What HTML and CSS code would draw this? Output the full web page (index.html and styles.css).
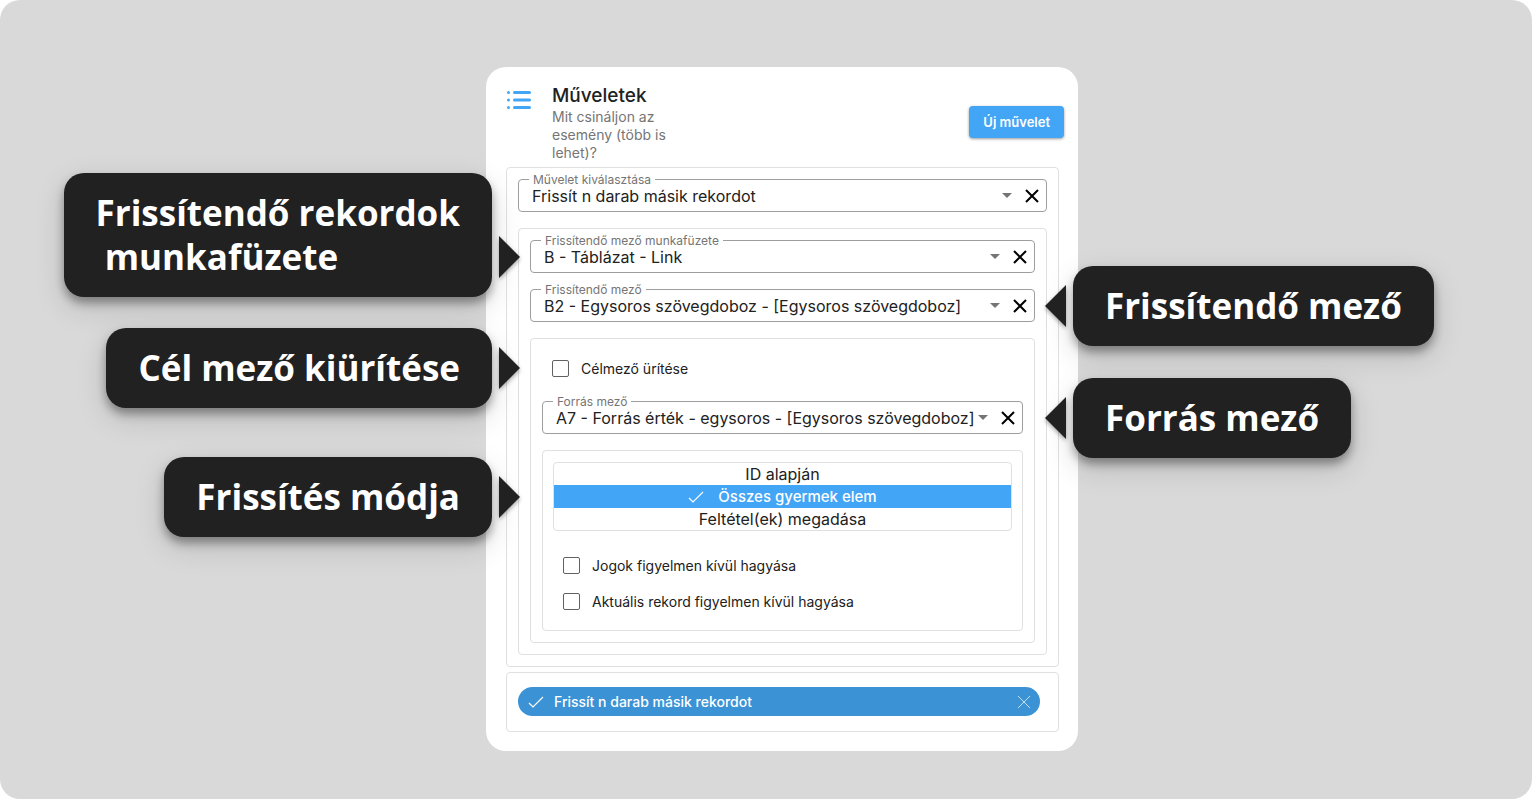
FILE: index.html
```html
<!DOCTYPE html>
<html lang="hu">
<head>
  <meta charset="UTF-8">
  <meta name="viewport" content="width=device-width, initial-scale=1.0">
  <title>Műveletek</title>
  <link rel="stylesheet" href="styles.css">
</head>
<body>
  <!-- shared icons -->
  <svg class="sprite" aria-hidden="true">
    <symbol id="icon-close" viewBox="0 0 14 14">
      <path d="M1 1l12 12M13 1L1 13" fill="none" stroke="currentColor"/>
    </symbol>
    <symbol id="icon-check" viewBox="0 0 16 12">
      <path d="M1 7l4 4L15 1" fill="none" stroke="currentColor" stroke-width="1.200"/>
    </symbol>
    <symbol id="icon-arrow" viewBox="0 0 10 5">
      <path d="M0 0h10L5 5z" fill="currentColor"/>
    </symbol>
  </svg>

  <main class="stage">
    <section class="panel">
      <header class="panel-header">
        <svg class="list-icon" viewBox="0 0 24 18" aria-hidden="true">
          <path d="M7.500 1.500h15M7.500 9h15M7.500 16.500h15" fill="none" stroke="currentColor" stroke-width="3" stroke-linecap="round"/>
          <circle cx="1.500" cy="1.500" r="1.500" fill="currentColor"/>
          <circle cx="1.500" cy="9" r="1.500" fill="currentColor"/>
          <circle cx="1.500" cy="16.500" r="1.500" fill="currentColor"/>
        </svg>
        <div class="heading">
          <h1>Műveletek</h1>
          <p>Mit csináljon az esemény (több is lehet)?</p>
        </div>
        <button class="new-btn" type="button">Új művelet</button>
      </header>

      <div class="group">
        <div class="field">
          <label for="action">Művelet kiválasztása</label>
          <select id="action"><option>Frissít n darab másik rekordot</option></select>
          <svg class="arrow"><use href="#icon-arrow"/></svg>
          <button class="clear" type="button" aria-label="Törlés"><svg><use href="#icon-close"/></svg></button>
        </div>

        <div class="group">
          <div class="field">
            <label for="sheet">Frissítendő mező munkafüzete</label>
            <select id="sheet"><option>B - Táblázat - Link</option></select>
            <svg class="arrow"><use href="#icon-arrow"/></svg>
            <button class="clear" type="button" aria-label="Törlés"><svg><use href="#icon-close"/></svg></button>
            <div class="callout left">Frissítendő rekordok
 munkafüzete</div>
          </div>
          <div class="field">
            <label for="target">Frissítendő mező</label>
            <select id="target"><option>B2 - Egysoros szövegdoboz - [Egysoros szövegdoboz]</option></select>
            <svg class="arrow"><use href="#icon-arrow"/></svg>
            <button class="clear" type="button" aria-label="Törlés"><svg><use href="#icon-close"/></svg></button>
            <div class="callout right">Frissítendő mező</div>
          </div>

          <div class="group depth-1">
            <div class="check-row">
              <input type="checkbox" id="empty">
              <label for="empty">Célmező ürítése</label>
              <div class="callout left">Cél mező kiürítése</div>
            </div>
            <div class="field">
              <label for="source">Forrás mező</label>
              <select id="source"><option>A7 - Forrás érték - egysoros - [Egysoros szövegdoboz]</option></select>
              <svg class="arrow"><use href="#icon-arrow"/></svg>
              <button class="clear" type="button" aria-label="Törlés"><svg><use href="#icon-close"/></svg></button>
              <div class="callout right">Forrás mező</div>
            </div>

            <div class="group depth-2">
              <div class="modes">
                <button type="button">ID alapján</button>
                <button type="button" class="active"><svg><use href="#icon-check"/></svg>Összes gyermek elem</button>
                <button type="button">Feltétel(ek) megadása</button>
                <div class="callout left">Frissítés módja</div>
              </div>
              <div class="check-row">
                <input type="checkbox" id="rights">
                <label for="rights">Jogok figyelmen kívül hagyása</label>
              </div>
              <div class="check-row">
                <input type="checkbox" id="current">
                <label for="current">Aktuális rekord figyelmen kívül hagyása</label>
              </div>
            </div>
          </div>
        </div>
      </div>

      <div class="group chips">
        <div class="chip">
          <svg class="chip-check"><use href="#icon-check"/></svg>
          <span>Frissít n darab másik rekordot</span>
          <button type="button" aria-label="Eltávolítás"><svg><use href="#icon-close"/></svg></button>
        </div>
      </div>
    </section>
  </main>
</body>
</html>
```
FILE: styles.css
```css
:root {
  --bg: #d9d9d9;
  --accent: #42a5f5;
  --chip: #3b93d6;
  --dark: #212121;
  --border: #e0e0e0;
  --muted: #757575;
}
* {
  box-sizing: border-box;
}
body {
  margin: 0;
  background: #fff;
  color: var(--dark);
  font-family: Inter, "Open Sans", sans-serif;
  font-size: 14px;
}
button, select, input {
  font: inherit;
  color: inherit;
  margin: 0;
}
button {
  padding: 0;
  border: none;
  background: none;
  cursor: pointer;
}
.sprite {
  display: none;
}
.stage {
  display: flex;
  justify-content: center;
  align-items: flex-start;
  min-height: 100vh;
  padding: 67px 0 48px 32px;
  border-radius: 20px;
  background: var(--bg);
  overflow: hidden;
}
.panel {
  width: 100%;
  max-width: 592px;
  padding: 17px 19px 19px 20px;
  border-radius: 20px;
  background: #fff;
}

/* header */
.panel-header {
  display: flex;
  align-items: flex-start;
  margin-right: -5px;
  padding-bottom: 5px;
}
.list-icon {
  width: 24px;
  height: 18px;
  margin: 7px 21px 0 1px;
  color: var(--accent);
}
.heading {
  width: 140px;
}
.heading h1 {
  margin: 0;
  font-size: 19px;
  font-weight: 500;
  line-height: 24px;
}
.heading p {
  margin: 0;
  line-height: 18px;
  color: var(--muted);
}
.new-btn {
  height: 32px;
  margin: 22px 0 0 auto;
  padding: 0 14px;
  border-radius: 4px;
  background: var(--accent);
  color: #fff;
  font-size: 13px;
  font-weight: 600;
  box-shadow: 0 1px 3px rgba(0, 0, 0, .4);
}

/* nested boxes */
.group {
  padding: 11px;
  border: 1px solid var(--border);
  border-radius: 4px;
}
.field {
  position: relative;
  display: flex;
  align-items: center;
  height: 33px;
  margin-bottom: 16px;
  padding-right: 7px;
  border: 1px solid #9e9e9e;
  border-radius: 4px;
}
.field label {
  position: absolute;
  top: -7px;
  left: 10px;
  padding: 0 4px;
  background: #fff;
  color: var(--muted);
  font-size: 12px;
  line-height: 14px;
}
.field select {
  flex: 1;
  min-width: 0;
  height: 30px;
  padding: 0 0 0 13px;
  border: none;
  background: none;
  appearance: none;
  font-size: 16px;
}
.arrow {
  width: 10px;
  height: 5px;
  margin-right: 13px;
  color: var(--muted);
}
.clear, .clear svg {
  display: block;
  width: 14px;
  height: 14px;
  color: #000;
  stroke-width: 2;
}

.check-row {
  position: relative;
  display: flex;
  align-items: center;
  height: 36px;
  padding-left: 10px;
}
.check-row input {
  appearance: none;
  width: 17px;
  height: 17px;
  margin-right: 12px;
  border: 1px solid #616161;
  border-radius: 2px;
}
.check-row input:checked {
  background: var(--accent);
}
.depth-1 > .check-row {
  margin-bottom: 15px;
}

.modes {
  position: relative;
  margin-bottom: 16px;
  border: 1px solid var(--border);
  border-radius: 4px;
}
.modes button {
  display: flex;
  justify-content: center;
  align-items: center;
  gap: 14px;
  width: 100%;
  height: 22px;
  font-size: 16px;
}
.modes svg {
  width: 16px;
  height: 12px;
}
.modes .active {
  height: 23px;
  background: var(--accent);
  color: #fff;
  font-size: 15px;
  font-weight: 500;
}
.depth-2 {
  padding: 11px 10px;
}

/* selected actions */
.chips {
  margin-top: 5px;
  padding: 14px 18px 15px 11px;
}
.chip {
  display: flex;
  align-items: center;
  height: 29px;
  padding: 0 9px 0 10px;
  border-radius: 15px;
  background: var(--chip);
  color: #fff;
  font-weight: 500;
}
.chip-check {
  width: 16px;
  height: 12px;
  margin-right: 10px;
}
.chip button {
  margin-left: auto;
  opacity: .7;
}
.chip button svg {
  display: block;
  width: 14px;
  height: 14px;
}

/* callouts pointing at the rows, --gap is the distance from the row edge */
.callout {
  --gap: 38px;
  position: absolute;
  bottom: calc(50% - 40px);
  z-index: 1;
  padding: 18px 32px;
  border-radius: 20px;
  background: var(--dark);
  color: #fff;
  font-family: "Open Sans", sans-serif;
  font-size: 35px;
  font-weight: 700;
  line-height: 44px;
  white-space: pre;
  box-shadow: 0 6px 10px rgba(0, 0, 0, .35), 0 10px 30px rgba(0, 0, 0, .15);
}
.field .callout {
  margin: 0 1px;
}
.depth-1 .callout {
  --gap: 50px;
}
.depth-2 .callout {
  --gap: 62px;
}
.callout.left {
  right: calc(100% + var(--gap));
}
.callout.right {
  left: calc(100% + var(--gap));
}
.callout::after {
  content: "";
  position: absolute;
  bottom: 19px;
  border: 21px solid transparent;
  filter: drop-shadow(0 2px 2px rgba(0, 0, 0, .35));
}
.callout.left::after {
  left: calc(100% + 7px);
  border-left-color: var(--dark);
  border-right: none;
}
.callout.right::after {
  right: calc(100% + 7px);
  border-right-color: var(--dark);
  border-left: none;
}
```
